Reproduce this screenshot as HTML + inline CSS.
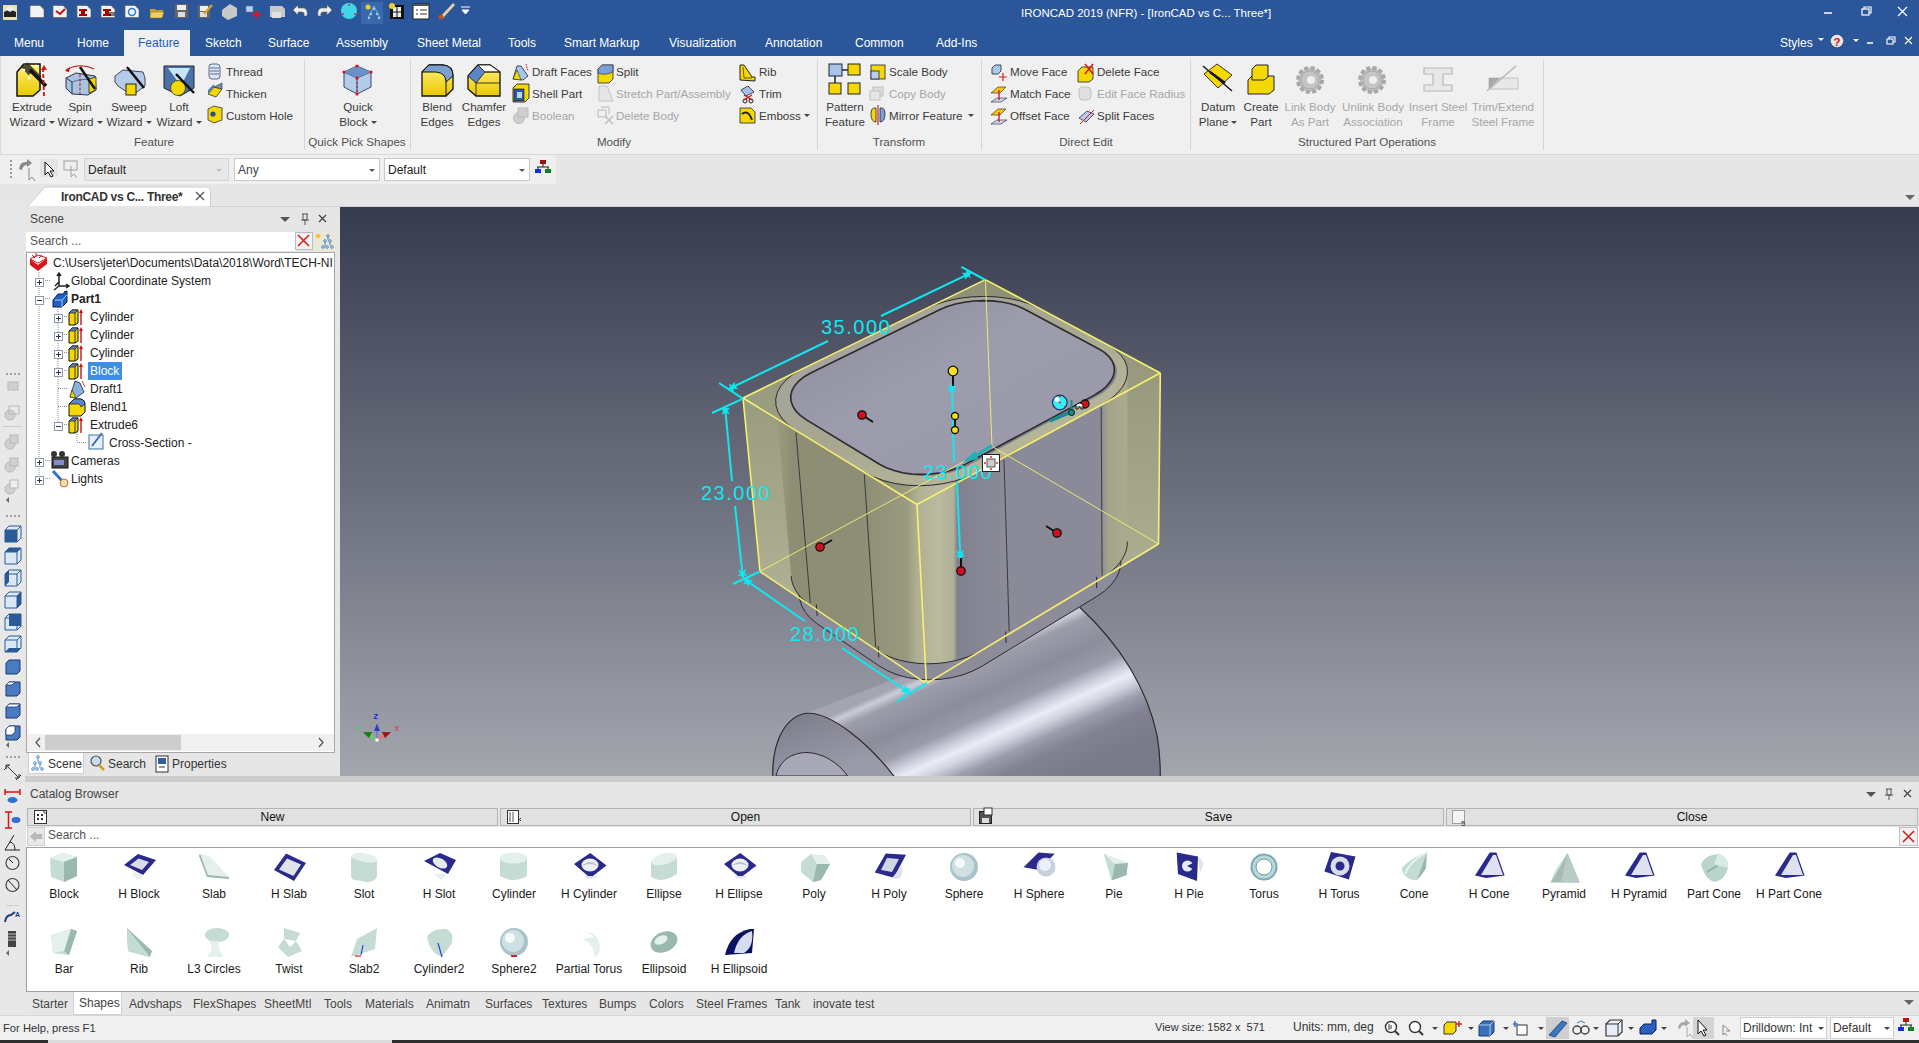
<!DOCTYPE html>
<html><head><meta charset="utf-8">
<style>
*{margin:0;padding:0;box-sizing:border-box}
html,body{width:1919px;height:1043px;overflow:hidden;background:#f0f0f0;font-family:"Liberation Sans",sans-serif;font-size:12px;color:#222;position:relative}
.a{position:absolute}
</style></head><body>
<!-- TITLE BAR -->
<div class="a" style="left:0;top:0;width:1919px;height:56px;background:#2b579a"></div>
<svg class="a" style="left:0;top:0" width="480" height="28">
 <rect x="3" y="5" width="14" height="15" fill="#e8e0b0"/><path d="M4 12 L10 9 L16 12 L16 17 L4 17Z" fill="#222"/><path d="M5 9 L10 6 L15 9 L10 12Z" fill="#eee"/>
 <g fill="#f2f2f2" stroke="#555" stroke-width="0.6">
  <path d="M30 5.5h10l4 4v8H30z"/><path d="M53 5.5h10l4 4v8H53z"/><path d="M77 5.5h10l4 4v8H77z"/><path d="M101 5.5h10l4 4v8h-14z"/><path d="M125 5.5h10l4 4v8h-14z"/>
 </g>
 <path d="M56 11l4 3 5-5" stroke="#c01010" stroke-width="2" fill="none"/>
 <path d="M79 9h8v2h-2v3h2v2h-8v-2h2v-3h-2z" fill="#a00"/>
 <path d="M103 9h8v2h-2v3h2v2h-8v-2h2v-3h-2z" fill="#a00"/><path d="M109 13h6M109 15h6" stroke="#000" stroke-width="1"/>
 <circle cx="132" cy="12" r="3.5" fill="none" stroke="#2a7fd0" stroke-width="1.5"/>
 <path d="M150 9h5l1 1h7v7h-13z" fill="#c8a030"/><path d="M151 12h13l-2 6h-12z" fill="#f0d060" stroke="#8a6a10" stroke-width="0.5"/>
 <rect x="175" y="4" width="13" height="14" fill="#666" rx="1"/><rect x="177" y="5" width="9" height="5" fill="#eee"/><rect x="178" y="12" width="7" height="5" fill="#ddd"/>
 <rect x="198" y="5" width="12" height="13" fill="#666" rx="1"/><rect x="200" y="6" width="8" height="5" fill="#eee"/><rect x="200" y="12" width="7" height="5" fill="#ddd"/><path d="M204 14 L212 5" stroke="#e0a020" stroke-width="2.2"/>
 <path d="M222 10 L230 4 L237 8 L237 16 L228 20 L222 16Z" fill="#c8c8c8"/>
 <rect x="246" y="6" width="7" height="6" fill="#b8d0f0" stroke="#5070a0" stroke-width="0.6"/><path d="M252 14h9M256.5 10v9" stroke="#d02020" stroke-width="2"/>
 <path d="M270 6h12l3 3v8h-15z" fill="#c8c8c8"/><rect x="272" y="12" width="9" height="6" fill="#e0e0e0"/>
 <path d="M293 10 L298 5 L298 8 L304 8 Q308 9 307 16 L304 16 Q305 12 302 12 L298 12 L298 15Z" fill="#eee" stroke="#666" stroke-width="0.6"/>
 <path d="M332 10 L327 5 L327 8 L321 8 Q317 9 318 16 L321 16 Q320 12 323 12 L327 12 L327 15Z" fill="#eee" stroke="#666" stroke-width="0.6"/>
 <circle cx="349" cy="11" r="8" fill="#40d8e8"/><circle cx="349" cy="5" r="1" fill="#e02040"/><circle cx="343" cy="14" r="1" fill="#e02040"/><circle cx="355" cy="14" r="1" fill="#e02040"/>
 <rect x="361" y="2" width="22" height="22" fill="#3a68ac"/><circle cx="368" cy="7" r="2.5" fill="#f0d020"/><path d="M374 6 L368 18 M374 6 L380 18" stroke="#7ab0e0" stroke-width="1"/><circle cx="374" cy="9" r="1.2" fill="#9cd"/><circle cx="371" cy="14" r="1.2" fill="#9cd"/><circle cx="377" cy="14" r="1.2" fill="#9cd"/><circle cx="369" cy="18" r="1.2" fill="#9cd"/><circle cx="379" cy="18" r="1.2" fill="#9cd"/>
 <rect x="390" y="5" width="14" height="14" fill="#111"/><rect x="393" y="7" width="8" height="10" fill="#eee"/><path d="M393 12h8M397 7v10" stroke="#111" stroke-width="1"/><circle cx="392" cy="6" r="3" fill="#f0d020"/>
 <rect x="413" y="4" width="16" height="15" fill="#fff" stroke="#222" stroke-width="1"/><rect x="413" y="4" width="16" height="2" fill="#555"/><path d="M416 10h2M420 10h7M416 14h2M420 14h7" stroke="#333" stroke-width="1"/>
 <path d="M440 17 L453 3 L455 5 L443 18Z" fill="#e8d0a0"/><circle cx="441" cy="17" r="2.5" fill="#c05020"/>
 <path d="M461 7h9M462 10h7l-3.5 4z" stroke="#fff" fill="#fff" stroke-width="1"/>
</svg>
<div class="a" style="left:1021px;top:7px;color:#fff;font-size:11.5px;white-space:nowrap">IRONCAD 2019 (NFR) - [IronCAD vs C... Three*]</div>
<svg class="a" style="left:1815px;top:0" width="104" height="28">
 <path d="M1824 13h8" transform="translate(-1815,0)" stroke="#fff" stroke-width="1.5"/>
 <g transform="translate(-1815,0)" stroke="#fff" stroke-width="1.2" fill="none"><rect x="1862" y="9" width="7" height="6"/><path d="M1864 9v-2h7v6h-2"/><path d="M1898 7l9 9M1907 7l-9 9"/></g>
</svg>
<!-- TABS -->
<div class="a" style="left:124px;top:30px;width:66px;height:27px;background:#f0f0f0"></div>
<div class="a tabs" style="top:36px;left:0;width:1919px;height:16px;color:#fff;font-size:12px;white-space:nowrap">
 <span class="a" style="left:14px">Menu</span><span class="a" style="left:77px">Home</span><span class="a" style="left:138px;color:#1d5fc0">Feature</span><span class="a" style="left:205px">Sketch</span><span class="a" style="left:268px">Surface</span><span class="a" style="left:336px">Assembly</span><span class="a" style="left:417px">Sheet Metal</span><span class="a" style="left:508px">Tools</span><span class="a" style="left:564px">Smart Markup</span><span class="a" style="left:669px">Visualization</span><span class="a" style="left:765px">Annotation</span><span class="a" style="left:855px">Common</span><span class="a" style="left:936px">Add-Ins</span>
 <span class="a" style="left:1780px">Styles</span>
</div>
<svg class="a" style="left:1800px;top:28px" width="119" height="28">
 <path d="M18 10h6l-3 3z" fill="#fff"/>
 <circle cx="37" cy="13" r="6.5" fill="#e8e8ec" stroke="#222" stroke-width="0.6" stroke-dasharray="1.5 1"/><text x="33.6" y="17.5" font-size="11.5" font-weight="bold" fill="#e01010" font-family="Liberation Sans">?</text>
 <path d="M53 11h6l-3 3z" fill="#fff"/>
 <path d="M67 15h6" stroke="#fff" stroke-width="1.5"/>
 <g stroke="#fff" stroke-width="1.1" fill="none"><rect x="87" y="11" width="6" height="5"/><path d="M89 11v-2h6v5h-2"/><path d="M105 9l7 7M112 9l-7 7"/></g>
</svg>

<!-- RIBBON -->
<div class="a" style="left:0;top:56px;width:1919px;height:99px;background:#f0f0f0;border-bottom:1px solid #d8d8d8;border-left:1px solid #dcdcdc"></div>
<svg class="a" style="left:0;top:56px" width="1919" height="98">
 <defs>
  <linearGradient id="yel" x1="0" y1="0" x2="0" y2="1"><stop offset="0" stop-color="#fff27a"/><stop offset="1" stop-color="#e8c800"/></linearGradient>
  <linearGradient id="blu" x1="0" y1="0" x2="1" y2="0"><stop offset="0" stop-color="#4a78b8"/><stop offset="1" stop-color="#b8d0ec"/></linearGradient>
 </defs>
 <g stroke="#d6d6d6" stroke-width="1"><path d="M304.5 3v91M410.5 3v91M817.5 3v91M981.5 3v91M1190.5 3v91M1543.5 3v91"/></g>
 <!-- Extrude -->
 <path d="M17 16 L24 8 L40 8 L40 34 L33 40 L17 40Z" fill="url(#yel)" stroke="#111" stroke-width="1.5"/>
 <path d="M22 9 L30 18 M26 8 L40 22" stroke="#222" stroke-width="4" opacity="0.8"/>
 <path d="M30 14 L46 30" stroke="#111" stroke-width="3.5"/><path d="M43 12 L44 40" stroke="#e01010" stroke-width="1.8" stroke-dasharray="4 2"/><path d="M41 14 L44 9 L47 14Z" fill="#e01010"/>
 <circle cx="24" cy="14" r="1.3" fill="#fff"/><circle cx="29" cy="22" r="1.3" fill="#fff"/><circle cx="36" cy="10" r="1.2" fill="#fff"/>
 <!-- Spin -->
 <path d="M66 22 L76 17 L95 20 L96 34 L88 39 L72 38 L66 32Z" fill="#a8c4e4" stroke="#334" stroke-width="1"/>
 <path d="M66 22 L72 26 L72 38" fill="none" stroke="#334" stroke-width="1"/><path d="M72 26 Q82 22 95 24" fill="none" stroke="#556" stroke-width="0.8"/>
 <path d="M89 23 L96 21 L96 34 L89 37Z" fill="#f5d800" stroke="#222" stroke-width="0.8"/>
 <path d="M80 11 L95 33" stroke="#111" stroke-width="2.5"/><path d="M80 18 L80 40" stroke="#c01010" stroke-width="1" stroke-dasharray="3 1.5"/>
 <path d="M66 14 Q80 6 94 13" fill="none" stroke="#c01010" stroke-width="1.2"/><path d="M65 15 L70 11 L69 16Z" fill="#c01010"/>
 <!-- Sweep -->
 <path d="M115 20 L123 14 L143 16 L145 22 L145 30 L137 36 L127 36 L118 30 L115 26Z" fill="#b4cce8" stroke="#445" stroke-width="1"/>
 <rect x="126" y="28" width="10" height="11" fill="#f5d800" stroke="#222" stroke-width="1"/>
 <path d="M127 11 L144 32" stroke="#111" stroke-width="2.5"/><circle cx="121" cy="12" r="1.2" fill="#fff"/><circle cx="129" cy="10" r="1.2" fill="#fff"/>
 <!-- Loft -->
 <path d="M164 10 L194 10 L194 32 L180 40 L164 32Z" fill="#4a72a8" stroke="#223" stroke-width="1"/>
 <path d="M168 12 L190 12 L181 30Z" fill="#c8e4f8"/>
 <circle cx="178" cy="32" r="7.5" fill="#f5d800" stroke="#333" stroke-width="0.8"/><path d="M176 18 L194 37" stroke="#111" stroke-width="2.5"/>
 <!-- Thread -->
 <rect x="209" y="8" width="11" height="15" rx="3" fill="#dde6f4" stroke="#5a6a8a" stroke-width="1"/><path d="M210 12h9M210 15h9M210 18h9" stroke="#5a6a8a" stroke-width="1"/>
 <!-- Thicken -->
 <path d="M208 38 L214 31 L222 33 L216 41Z" fill="#f5d800" stroke="#333" stroke-width="0.8"/><path d="M214 31 L222 27 L222 33Z" fill="#7090c0" stroke="#333" stroke-width="0.6"/><path d="M208 38 L208 34 L214 28 L214 31Z" fill="#5a7ab0"/>
 <!-- Custom Hole -->
 <path d="M208 53 L214 50 L222 52 L222 64 L214 67 L208 64Z" fill="#f5d800" stroke="#333" stroke-width="0.8"/><circle cx="213" cy="58" r="2.6" fill="#2a4a90"/>
 <!-- Quick Block -->
 <path d="M344 16 L357 10 L371 16 L371 31 L357 38 L344 31Z" fill="#b4cce8" stroke="#2a4a80" stroke-width="1"/><path d="M344 16 L357 22 L371 16 M357 22 L357 38" fill="none" stroke="#2a4a80" stroke-width="1"/><path d="M344 16 L357 10 L371 16 L357 22Z" fill="#6a90c8"/>
 <path d="M357 22 L357 38" stroke="#c01010" stroke-dasharray="2 2"/><circle cx="344" cy="16" r="1.6" fill="#e01020"/><circle cx="357" cy="10" r="1.6" fill="#e01020"/><circle cx="371" cy="16" r="1.6" fill="#e01020"/><circle cx="357" cy="22" r="1.6" fill="#e01020"/><circle cx="357" cy="38" r="1.6" fill="#e01020"/>
 <!-- Blend Edges -->
 <path d="M422 16 L429 9 L443 9 Q453 10 453 20 L453 33 L446 40 L422 40Z" fill="url(#yel)" stroke="#111" stroke-width="1.3"/>
 <path d="M422 16 L429 9 L443 9 Q453 10 453 20 L446 26 Q446 17 436 16Z" fill="#7aa0d0" stroke="#111" stroke-width="1"/><path d="M446 26 L446 40" stroke="#111" stroke-width="1"/>
 <!-- Chamfer -->
 <path d="M468 20 L478 9 L490 9 L500 16 L500 40 L476 40 L468 33Z" fill="url(#yel)" stroke="#111" stroke-width="1.3"/>
 <path d="M468 20 L478 9 L485 16 L476 27Z" fill="#5a88c4" stroke="#111" stroke-width="0.8"/><path d="M478 9 L490 9 L500 16 L485 16Z" fill="#fff" stroke="#111" stroke-width="0.8"/><path d="M485 16 L500 16 M476 27 L476 40 M476 27 L500 27" fill="none" stroke="#111" stroke-width="0.8"/>
 <!-- Draft faces -->
 <path d="M513 23 L517 10 L521 10 L528 20 L523 24Z" fill="#a8c4e8" stroke="#223" stroke-width="0.8"/><path d="M513 23 L517 14 L521 24Z" fill="#f5d800" stroke="#223" stroke-width="0.6"/><path d="M526 8 L528 15" stroke="#c01010" stroke-width="1" stroke-dasharray="1.5 1"/>
 <!-- Shell part -->
 <path d="M513 32 L517 28 L529 28 L529 42 L525 46 L513 46Z" fill="#f5d800" stroke="#112" stroke-width="0.8"/><rect x="514" y="33" width="10" height="12" fill="#2a5aa0" stroke="#112" stroke-width="0.6"/><rect x="517" y="36" width="5" height="6" fill="#b8d4f0"/>
 <!-- Boolean disabled -->
 <g fill="#cfcfcf" stroke="#bdbdbd" stroke-width="1"><circle cx="519" cy="62" r="5.5"/><rect x="518" y="52" width="10" height="9"/></g>
 <!-- Split -->
 <path d="M598 13 L602 9 L613 9 L613 23 L609 27 L598 27Z" fill="#f5d800" stroke="#223" stroke-width="0.8"/><path d="M598 13 L602 9 L613 9 L613 16 Q605 20 598 17Z" fill="#7aa0d8" stroke="#223" stroke-width="0.6"/>
 <!-- Stretch disabled -->
 <path d="M599 30 L607 30 L613 45 L599 45Z" fill="#e6e6e6" stroke="#c4c4c4" stroke-width="1"/>
 <!-- Delete body disabled -->
 <path d="M598 54 h8v7h-8z M601 51 h8v7" fill="none" stroke="#b8b8b8" stroke-width="1"/><path d="M605 60 l8 8 M613 60 l-8 8" stroke="#c0c0c0" stroke-width="1.6"/>
 <!-- Rib -->
 <path d="M740 24 L740 9 L744 9 L752 21 L755 21 L755 25Z" fill="#f5d800" stroke="#223" stroke-width="1"/><path d="M743 11 L744 22 L752 22" fill="none" stroke="#223" stroke-width="0.7"/>
 <!-- Trim -->
 <path d="M741 34 L748 30 L754 36 L746 40Z" fill="#a8c0e8" stroke="#223" stroke-width="0.8"/><circle cx="745" cy="45" r="2" fill="none" stroke="#222"/><circle cx="751" cy="45" r="2" fill="none" stroke="#222"/><path d="M744 39 L752 44 M752 39 L744 44" stroke="#c01010" stroke-width="1.2"/>
 <!-- Emboss -->
 <path d="M740 52 L751 52 L755 56 L755 67 L740 67Z" fill="#f5d800" stroke="#223" stroke-width="0.8"/><path d="M742 58 Q748 53 752 64" fill="none" stroke="#223" stroke-width="2"/>
 <path d="M804 58h6l-3 3z" fill="#444"/>
 <!-- Pattern feature -->
 <rect x="829" y="8" width="13" height="12" fill="#a8c4e8" stroke="#223" stroke-width="1"/><rect x="848" y="8" width="12" height="11" fill="#f5d800" stroke="#223" stroke-width="1"/><rect x="829" y="27" width="12" height="11" fill="#f5d800" stroke="#223" stroke-width="1"/><rect x="848" y="27" width="12" height="11" fill="#f5d800" stroke="#223" stroke-width="1"/><path d="M842 14h6M835 20v7" stroke="#223" stroke-width="1.5"/>
 <!-- Scale body -->
 <rect x="871" y="9" width="14" height="14" fill="#f5d800" stroke="#223" stroke-width="0.8"/><rect x="871" y="15" width="8" height="8" fill="#b8d0f0" stroke="#223" stroke-width="0.8"/>
 <!-- Copy body disabled -->
 <rect x="873" y="31" width="10" height="9" fill="#ddd" stroke="#c0c0c0"/><rect x="870" y="35" width="10" height="9" fill="#e6e6e6" stroke="#c0c0c0"/>
 <!-- Mirror feature -->
 <path d="M871 58 Q871 51 876 52 L876 66 Q871 66 871 58Z" fill="#f5d800" stroke="#223" stroke-width="0.8"/><path d="M885 58 Q885 51 880 52 L880 66 Q885 66 885 58Z" fill="#7aa0d8" stroke="#223" stroke-width="0.8"/><path d="M878 49 L878 69" stroke="#d02020" stroke-width="1.2"/>
 <path d="M968 58h6l-3 3z" fill="#444"/>
 <!-- Move face -->
 <path d="M992 12 L995 9 L1001 9 L1001 15 L998 18 L992 18Z" fill="#a8c8f0" stroke="#223" stroke-width="0.8"/><path d="M1003 17 v8 M999 21 h8" stroke="#d02020" stroke-width="1.2"/>
 <!-- Match face -->
 <path d="M991 37 L998 31 L1006 31 L1000 37Z" fill="#f5c800" stroke="#223" stroke-width="0.6"/><path d="M991 46 L997 42 L1007 42 L1001 46Z" fill="#c8d8f0" stroke="#223" stroke-width="0.6"/><path d="M999 34 L999 44" stroke="#d02020" stroke-width="1.4"/>
 <!-- Offset face -->
 <path d="M991 59 L998 53 L1006 53 L1000 59Z" fill="#f5c800" stroke="#223" stroke-width="0.6"/><path d="M991 68 L997 64 L1007 64 L1001 68Z" fill="#c8d8f0" stroke="#223" stroke-width="0.6"/><path d="M999 56 L999 66" stroke="#d02020" stroke-width="1.4"/>
 <!-- Delete face -->
 <path d="M1078 15 L1082 11 L1093 11 L1093 23 L1089 26 L1078 26Z" fill="#f5d800" stroke="#223" stroke-width="0.8"/><path d="M1085 8 L1093 18 M1093 8 L1085 18" stroke="#e01010" stroke-width="1.5"/>
 <!-- Edit face radius disabled -->
 <rect x="1079" y="31" width="12" height="13" rx="4" fill="#e0e0e0" stroke="#c0c0c0"/>
 <!-- Split faces -->
 <path d="M1079 62 L1087 55 L1094 58 L1086 66Z" fill="#b8c8f0" stroke="#334" stroke-width="0.8"/><path d="M1080 68 L1094 54" stroke="#d02020" stroke-width="1"/>
 <!-- Datum plane -->
 <path d="M1204 18 L1217 8 L1232 19 L1218 32Z" fill="#f5d800" stroke="#333" stroke-width="1"/><path d="M1203 10 L1232 35" stroke="#111" stroke-width="1.4"/><path d="M1210 16 L1225 27" stroke="#111" stroke-width="2.5"/>
 <!-- Create part -->
 <path d="M1248 24 L1252 20 L1274 20 L1274 34 L1269 38 L1248 38Z" fill="#f5d800" stroke="#223" stroke-width="1"/><path d="M1252 13 L1256 9 L1268 9 L1268 21 L1264 24 L1252 24Z" fill="#f5d800" stroke="#223" stroke-width="1"/>
 <!-- Disabled gears -->
 <g fill="#c4c4c4" stroke="#a8a8a8" stroke-width="1">
  <circle cx="1310" cy="24" r="12" stroke-dasharray="4 2.3" stroke-width="4"/><circle cx="1310" cy="24" r="9"/>
  <circle cx="1372" cy="24" r="12" stroke-dasharray="4 2.3" stroke-width="4"/><circle cx="1372" cy="24" r="9"/>
 </g>
 <circle cx="1311" cy="24" r="4" fill="#eee"/><circle cx="1373" cy="24" r="4" fill="#eee"/>
 <path d="M1424 12 h28 v6 h-9 v11 h9 v6 h-28 v-6 h9 v-11 h-9z" fill="#e8e8e8" stroke="#b8b8b8" stroke-width="1.2"/>
 <path d="M1489 33 L1489 22 L1518 22 L1518 33Z" fill="#e8e8e8" stroke="#c0c0c0"/><path d="M1489 33 L1500 22 L1489 22Z" fill="#a8a8a8"/><path d="M1487 35 L1516 10" stroke="#b4b4b4" stroke-width="1.2"/>
</svg>
<style>
.rl{position:absolute;font-size:11.6px;line-height:12px;color:#3a3a3a;white-space:nowrap}
.rc{position:absolute;font-size:11.6px;line-height:15px;color:#3a3a3a;text-align:center;white-space:nowrap}
.dis{color:#a6a6a6}
.gl{position:absolute;top:136px;font-size:11.6px;line-height:12px;color:#505050;text-align:center;white-space:nowrap}
.dd{display:inline-block;width:0;height:0;border-left:3px solid transparent;border-right:3px solid transparent;border-top:3px solid #444;vertical-align:2px;margin-left:3px}
</style>
<div class="rc" style="left:2px;top:99px;width:60px">Extrude<br>Wizard<span class="dd"></span></div>
<div class="rc" style="left:50px;top:99px;width:60px">Spin<br>Wizard<span class="dd"></span></div>
<div class="rc" style="left:99px;top:99px;width:60px">Sweep<br>Wizard<span class="dd"></span></div>
<div class="rc" style="left:149px;top:99px;width:60px">Loft<br>Wizard<span class="dd"></span></div>
<div class="rl" style="left:226px;top:66px">Thread</div>
<div class="rl" style="left:226px;top:88px">Thicken</div>
<div class="rl" style="left:226px;top:110px">Custom Hole</div>
<div class="gl" style="left:104px;width:100px">Feature</div>
<div class="rc" style="left:318px;top:99px;width:80px">Quick<br>Block<span class="dd"></span></div>
<div class="gl" style="left:304px;width:106px">Quick Pick Shapes</div>
<div class="rc" style="left:407px;top:99px;width:60px">Blend<br>Edges</div>
<div class="rc" style="left:454px;top:99px;width:60px">Chamfer<br>Edges</div>
<div class="rl" style="left:532px;top:66px">Draft Faces</div>
<div class="rl" style="left:532px;top:88px">Shell Part</div>
<div class="rl dis" style="left:532px;top:110px">Boolean</div>
<div class="rl" style="left:616px;top:66px">Split</div>
<div class="rl dis" style="left:616px;top:88px">Stretch Part/Assembly</div>
<div class="rl dis" style="left:616px;top:110px">Delete Body</div>
<div class="rl" style="left:759px;top:66px">Rib</div>
<div class="rl" style="left:759px;top:88px">Trim</div>
<div class="rl" style="left:759px;top:110px">Emboss</div>
<div class="gl" style="left:564px;width:100px">Modify</div>
<div class="rc" style="left:815px;top:99px;width:60px">Pattern<br>Feature</div>
<div class="rl" style="left:889px;top:66px">Scale Body</div>
<div class="rl dis" style="left:889px;top:88px">Copy Body</div>
<div class="rl" style="left:889px;top:110px">Mirror Feature</div>
<div class="gl" style="left:849px;width:100px">Transform</div>
<div class="rl" style="left:1010px;top:66px">Move Face</div>
<div class="rl" style="left:1010px;top:88px">Match Face</div>
<div class="rl" style="left:1010px;top:110px">Offset Face</div>
<div class="rl" style="left:1097px;top:66px">Delete Face</div>
<div class="rl dis" style="left:1097px;top:88px">Edit Face Radius</div>
<div class="rl" style="left:1097px;top:110px">Split Faces</div>
<div class="gl" style="left:1036px;width:100px">Direct Edit</div>
<div class="rc" style="left:1188px;top:99px;width:60px">Datum<br>Plane<span class="dd"></span></div>
<div class="rc" style="left:1231px;top:99px;width:60px">Create<br>Part</div>
<div class="rc dis" style="left:1280px;top:99px;width:60px">Link Body<br>As Part</div>
<div class="rc dis" style="left:1338px;top:99px;width:70px">Unlink Body<br>Association</div>
<div class="rc dis" style="left:1403px;top:99px;width:70px">Insert Steel<br>Frame</div>
<div class="rc dis" style="left:1468px;top:99px;width:70px">Trim/Extend<br>Steel Frame</div>
<div class="gl" style="left:1267px;width:200px">Structured Part Operations</div>

<!-- TOOLBAR ROW -->
<div class="a" style="left:0;top:155px;width:1919px;height:52px;background:#e6e6e6"></div>
<div class="a" style="left:0;top:155px;width:556px;height:29px;background:#efefef"></div>
<svg class="a" style="left:0;top:155px" width="560" height="29">
 <g fill="#9a9a9a"><rect x="10" y="5" width="2" height="2"/><rect x="10" y="9" width="2" height="2"/><rect x="10" y="13" width="2" height="2"/><rect x="10" y="17" width="2" height="2"/><rect x="10" y="21" width="2" height="2"/></g>
 <path d="M19 14 Q20 6 27 7 L27 4 L32 8 L27 12 L27 10 Q23 10 22 15Z" fill="#888"/><path d="M29 13 L29 25 L32 22 L35 26" fill="none" stroke="#888" stroke-width="1"/>
 <rect x="40" y="4" width="18" height="18" fill="#e4e4e4"/><path d="M45 7 L45 20 L48 17 L51 22 L53 21 L50 16 L54 16Z" fill="#fff" stroke="#111" stroke-width="1"/>
 <rect x="64" y="6" width="13" height="9" fill="none" stroke="#a0a0a0"/><path d="M71 11 L71 22 L74 19 L77 23" fill="none" stroke="#a0a0a0"/>
 <rect x="84.5" y="3.5" width="144" height="22" fill="#e8e8e8" stroke="#d4d4d4"/>
 <path d="M216 14h6l-3 3z" fill="#c0c0c0"/>
 <rect x="234.5" y="3.5" width="145" height="22" fill="#fff" stroke="#c8c8c8"/>
 <path d="M369 14h6l-3 3z" fill="#555"/>
 <rect x="384.5" y="3.5" width="145" height="22" fill="#fff" stroke="#c8c8c8"/>
 <path d="M519 14h6l-3 3z" fill="#555"/>
 <rect x="540" y="5" width="6" height="4" fill="#a01010"/><path d="M543 9v3M537 12h12M538 12v2M548 12v2" stroke="#222" stroke-width="1" fill="none"/><rect x="535" y="14" width="6" height="4" fill="#1030e0"/><rect x="545" y="14" width="6" height="4" fill="#108020"/>
</svg>
<div class="a" style="left:88px;top:164px;font-size:12px;line-height:12px;color:#222">Default</div>
<div class="a" style="left:238px;top:164px;font-size:12px;line-height:12px;color:#444">Any</div>
<div class="a" style="left:388px;top:164px;font-size:12px;line-height:12px;color:#222">Default</div>
<!-- DOC TAB -->
<svg class="a" style="left:0;top:184px" width="1919" height="24">
 <path d="M211 22.5 H1919" stroke="#d0d0d0"/>
 <path d="M27 23 L45 3 H207 Q210.5 3 210.5 6.5 V23Z" fill="#fff" stroke="#cfcfcf"/>
 <path d="M196 8 l8 8 M204 8 l-8 8" stroke="#555" stroke-width="1.3"/>
 <path d="M1905 11h10l-5 5z" fill="#666"/>
</svg>
<div class="a" style="left:61px;top:191px;font-size:12px;line-height:12px;color:#333;font-weight:bold;letter-spacing:-0.3px">IronCAD vs C... Three*</div>

<!-- SCENE PANEL -->
<div class="a" style="left:0;top:207px;width:340px;height:808px;background:#e6e6e6"></div>
<div class="a" style="left:25px;top:207px;width:313px;height:568px;background:#e6e6e6"></div>
<div class="a" style="left:30px;top:213px;font-size:12px;line-height:12px;color:#444">Scene</div>
<svg class="a" style="left:270px;top:207px" width="70" height="24">
 <path d="M10 10h10l-5 5z" fill="#555"/>
 <path d="M32 7h6M33 7v6h4v-6M31 13h8M35 13v5" stroke="#555" stroke-width="1" fill="none"/>
 <path d="M49 8l7 7M56 8l-7 7" stroke="#444" stroke-width="1.3"/>
</svg>
<div class="a" style="left:26px;top:232px;width:270px;height:19px;background:#fff"></div>
<div class="a" style="left:30px;top:235px;font-size:12px;line-height:12px;color:#555">Search ...</div>
<svg class="a" style="left:294px;top:231px" width="42" height="22">
 <rect x="1.5" y="1.5" width="17" height="17" fill="#f4f4f4" stroke="#bbb"/>
 <path d="M4 4l11 11M15 4l-11 11" stroke="#d42020" stroke-width="1.6"/>
 <rect x="21" y="1" width="20" height="20" fill="#ebe6d6"/>
 <path d="M24 2 l1 2 2 0 -1.5 1.5 .5 2 -2 -1 -2 1 .5 -2 -1.5 -1.5 2 0z" fill="#f0c020"/>
 <g fill="none" stroke="#3a80c8" stroke-width="0.9"><circle cx="34" cy="5" r="1.3"/><circle cx="31" cy="10" r="1.3"/><circle cx="36" cy="10" r="1.3"/><circle cx="29" cy="16" r="1.3"/><circle cx="33" cy="16" r="1.3"/><circle cx="38" cy="16" r="1.3"/><path d="M34 6v3M31 11v4M36 11v4"/></g>
</svg>
<!-- tree box -->
<div class="a" style="left:26px;top:252px;width:309px;height:500px;background:#fff;border:1px solid #a8a8a8;border-bottom:0"></div>
<svg class="a" style="left:26px;top:252px" width="309" height="500">
 <defs>
  <g id="exp"><rect x="0.5" y="0.5" width="8" height="8" fill="#fff" stroke="#8a9ab0"/></g>
  <g id="plus"><use href="#exp"/><path d="M2 4.5h5M4.5 2v5" stroke="#334" stroke-width="1"/></g>
  <g id="minus"><use href="#exp"/><path d="M2 4.5h5" stroke="#334" stroke-width="1"/></g>
  <g id="cyl"><path d="M1 5 L4 2 L10 2 L10 15 L7 17 L1 17Z" fill="#f5d800" stroke="#111" stroke-width="1"/><path d="M1 5 L4 2 L10 2 L7 5Z" fill="#5a88d0" stroke="#111" stroke-width="0.7"/><path d="M7 5v12" stroke="#111" stroke-width="0.8"/><path d="M13 17 V3" stroke="#d01010" stroke-width="1.4"/><path d="M11 5 L13 1 L15 5Z" fill="#d01010"/></g>
 </defs>
 <g stroke="#909090" stroke-width="1" stroke-dasharray="1 1" fill="none">
  <path d="M13 20 V226 M13 28.5 H24 M13 46.5 H24 M13 208.5 H24 M13 226.5 H24"/>
  <path d="M32 55 V172 M32 64.5 H42 M32 82.5 H42 M32 100.5 H42 M32 118.5 H42 M32 136.5 H42 M32 154.5 H42 M32 172.5 H42"/>
  <path d="M51 176 V190 M51 190.5 H61"/>
 </g>
 <!-- row0 icon -->
 <path d="M4 7 L12 13 L21 6 L21 12 L12 19 L4 13Z" fill="#d81818"/><path d="M4 7 L12 3 L21 6 L12 11Z" fill="#fff" stroke="#d81818" stroke-width="1"/><path d="M10 1v4M6 3l3 3M16 3l-3 3" stroke="#d81818" stroke-width="1"/>
 <use href="#plus" x="9" y="26"/>
 <path d="M29 34 L33 30 M33 22 V34 H42 M31 24 L33 21 L35 24 M40 32 L43 34 L40 36 M33 34 L28 38" stroke="#222" stroke-width="1.5" fill="none"/>
 <use href="#minus" x="9" y="44"/>
 <path d="M27 48 L32 42 L38 42 L38 40 L41 39 L41 50 L36 55 L27 55Z" fill="#2060c8" stroke="#0a2050" stroke-width="1"/><path d="M29 48 L36 48 L36 55 M36 48 L41 43" stroke="#a8c8f0" stroke-width="1" fill="none"/>
 <use href="#plus" x="28" y="62"/><use href="#cyl" x="42" y="56"/>
 <use href="#plus" x="28" y="80"/><use href="#cyl" x="42" y="74"/>
 <use href="#plus" x="28" y="98"/><use href="#cyl" x="42" y="92"/>
 <use href="#plus" x="28" y="116"/><use href="#cyl" x="42" y="110"/>
 <rect x="62" y="110" width="34" height="18" fill="#3d8ee6"/>
 <path d="M44 145 L49 129 L54 131 L58 140 L50 146Z" fill="#8ab0e0" stroke="#222" stroke-width="0.8"/><path d="M44 145 L46 138 L50 146Z" fill="#f5d800" stroke="#222" stroke-width="0.6"/><path d="M56 129 L59 135" stroke="#c01010" stroke-width="0.8"/>
 <path d="M43 152 L48 147 L55 147 Q59 148 59 152 L59 160 L55 164 L43 164Z" fill="#f5d800" stroke="#111" stroke-width="1"/><path d="M43 152 L48 147 L55 147 Q59 148 59 152 L55 155 Q54 151 50 152Z" fill="#5a88d0" stroke="#111" stroke-width="0.7"/>
 <use href="#minus" x="28" y="170"/><use href="#cyl" x="42" y="164"/>
 <rect x="63" y="183" width="14" height="14" fill="#e8f0f8" stroke="#3a70b0" stroke-width="1"/><path d="M66 194 L76 181" stroke="#3a70b0" stroke-width="2"/>
 <use href="#plus" x="9" y="206"/>
 <rect x="26" y="205" width="16" height="11" fill="#444" stroke="#111"/><circle cx="28" cy="202" r="3" fill="#333"/><circle cx="36" cy="202" r="3" fill="#333"/><rect x="28" y="208" width="10" height="5" fill="#8888cc"/>
 <use href="#plus" x="9" y="224"/>
 <path d="M27 219 L38 231" stroke="#3a70c0" stroke-width="3"/><circle cx="38" cy="231" r="4" fill="#f0e0a0" stroke="#c04040" stroke-width="0.8"/>
 <!-- h scrollbar -->
 <rect x="1" y="482" width="307" height="17" fill="#f0f0f0"/>
 <rect x="19" y="483" width="136" height="15" fill="#cdcdcd"/>
 <path d="M14 486 L10 490.5 L14 495 M293 486 L297 490.5 L293 495" stroke="#555" stroke-width="1.3" fill="none"/>
</svg>
<style>.tr{position:absolute;font-size:12px;line-height:12px;color:#222;white-space:nowrap}</style>
<div class="tr" style="left:53px;top:257px">C:\Users\jeter\Documents\Data\2018\Word\TECH-NI</div>
<div class="tr" style="left:71px;top:275px">Global Coordinate System</div>
<div class="tr" style="left:71px;top:293px;font-weight:bold">Part1</div>
<div class="tr" style="left:90px;top:311px">Cylinder</div>
<div class="tr" style="left:90px;top:329px">Cylinder</div>
<div class="tr" style="left:90px;top:347px">Cylinder</div>
<div class="tr" style="left:90px;top:365px;color:#fff">Block</div>
<div class="tr" style="left:90px;top:383px">Draft1</div>
<div class="tr" style="left:90px;top:401px">Blend1</div>
<div class="tr" style="left:90px;top:419px">Extrude6</div>
<div class="tr" style="left:109px;top:437px">Cross-Section -</div>
<div class="tr" style="left:71px;top:455px">Cameras</div>
<div class="tr" style="left:71px;top:473px">Lights</div>
<!-- bottom tabs -->
<div class="a" style="left:26px;top:752px;width:309px;height:1px;background:#a8a8a8"></div>
<div class="a" style="left:28px;top:753px;width:56px;height:21px;background:#fff;border:1px solid #d0d0d0;border-top:0"></div>
<svg class="a" style="left:28px;top:753px" width="200" height="22">
 <g fill="none" stroke="#3a80c8" stroke-width="0.9"><circle cx="10" cy="4" r="1.3"/><circle cx="7" cy="10" r="1.3"/><circle cx="12" cy="10" r="1.3"/><circle cx="5" cy="16" r="1.3"/><circle cx="9" cy="16" r="1.3"/><circle cx="14" cy="16" r="1.3"/><path d="M10 5v4M7 11v4M12 11v4"/></g>
 <circle cx="68" cy="8" r="5" fill="#c8dcf0" stroke="#555" stroke-width="1.2"/><path d="M71 12 L76 17" stroke="#d0a020" stroke-width="2.5"/>
 <rect x="128" y="3" width="12" height="16" fill="#fff" stroke="#333"/><rect x="130" y="5" width="8" height="6" fill="#3060a0"/><path d="M131 14h6" stroke="#333"/>
</svg>
<div class="tr" style="left:48px;top:758px;color:#333">Scene</div>
<div class="tr" style="left:108px;top:758px;color:#333">Search</div>
<div class="tr" style="left:172px;top:758px;color:#333">Properties</div>
<!-- LEFT VERTICAL TOOLBAR -->
<div class="a" style="left:0;top:207px;width:25px;height:808px;background:#e8e8e8"></div>
<svg class="a" style="left:0;top:360px" width="25" height="600">
 <g fill="#a0a0a0"><rect x="6" y="13" width="2" height="2"/><rect x="10" y="13" width="2" height="2"/><rect x="14" y="13" width="2" height="2"/><rect x="18" y="13" width="2" height="2"/></g>
 <g fill="#d0d0d0" stroke="#b8b8b8" stroke-width="1">
  <rect x="8" y="22" width="10" height="8"/><circle cx="10" cy="55" r="5"/><rect x="9" y="46" width="10" height="8" fill="none"/>
  <circle cx="10" cy="84" r="5"/><rect x="10" y="75" width="8" height="8"/>
  <circle cx="10" cy="107" r="5"/><rect x="10" y="98" width="8" height="8"/>
  <circle cx="10" cy="129" r="5"/><rect x="10" y="120" width="8" height="8" fill="#eee"/>
 </g>
 <path d="M3 66.5h19" stroke="#ccc"/>
 <path d="M9 137 L6 140 L9 143Z" fill="#666"/>
 <g fill="#a0a0a0"><rect x="6" y="155" width="2" height="2"/><rect x="10" y="155" width="2" height="2"/><rect x="14" y="155" width="2" height="2"/><rect x="18" y="155" width="2" height="2"/></g>
 <defs><g id="vc"><path d="M5 7 L9 3 L21 3 L21 15 L17 19 L5 19Z" fill="#dce8f6" stroke="#2a5a98" stroke-width="1"/><path d="M5 7 H17 V19 M17 7 L21 3" fill="none" stroke="#2a5a98" stroke-width="1"/></g>
 <g id="vd"><path d="M6 8 L9 5 L20 5 L20 16 L17 19 L6 19Z" fill="#4a7ac0" stroke="#1a3a70" stroke-width="1"/></g></defs>
 <use href="#vc" y="163"/><rect x="5" y="170" width="12" height="12" fill="#2a5a98"/>
 <use href="#vc" y="185"/><path d="M5 192 L9 188 L21 188 L17 192Z" fill="#2a5a98"/>
 <use href="#vc" y="207"/><path d="M5 214 L9 210 L9 222 L5 226Z" fill="#2a5a98"/>
 <use href="#vc" y="229"/><path d="M17 236 L21 232 L21 244 L17 248Z" fill="#2a5a98"/>
 <use href="#vc" y="251"/><rect x="9" y="254" width="12" height="12" fill="#2a5a98"/>
 <use href="#vc" y="273"/><path d="M5 292 L9 288 L21 288 L17 292Z" fill="#2a5a98"/>
 <use href="#vd" y="295"/>
 <use href="#vd" y="317"/><path d="M6 330 L9 327 L14 327 L14 322 L17 322 L17 333 L6 333Z" fill="#fff" opacity="0"/><path d="M6 325 L9 322 L15 322 L12 325Z" fill="#fff" stroke="#1a3a70" stroke-width="0.8"/>
 <use href="#vd" y="339"/><path d="M6 347 L9 344 L20 344 L17 347Z" fill="#fff" stroke="#1a3a70" stroke-width="0.8"/>
 <use href="#vd" y="361"/><path d="M6 369 L9 366 L15 366 L15 372 L12 375 L6 375Z" fill="#fff" stroke="#1a3a70" stroke-width="0.8"/>
 <path d="M9 382 L6 385 L9 388Z" fill="#666"/>
 <g fill="#a0a0a0"><rect x="6" y="396" width="2" height="2"/><rect x="10" y="396" width="2" height="2"/><rect x="14" y="396" width="2" height="2"/><rect x="18" y="396" width="2" height="2"/></g>
 <path d="M6 405 L19 418 M6 405 l0 4 M6 405 l4 0 M19 418 l-4 0 M19 418 l0 -4 M4 410 L9 405 M16 420 L21 415" stroke="#333" stroke-width="1" fill="none"/>
 <path d="M5 432 H20 M5 429 V435 M20 429 V435" stroke="#e01010" stroke-width="1.5"/><ellipse cx="12.5" cy="440" rx="5" ry="3" fill="#3070d0"/>
 <path d="M5 452 H12 M8.5 452 V468 M5 468 H12" stroke="#e01010" stroke-width="1.5"/><ellipse cx="16" cy="460" rx="4.5" ry="3" fill="#3070d0"/>
 <path d="M5 490 H20 M5 490 L14 475 M10 482 Q15 483 15 490" stroke="#222" stroke-width="1" fill="none"/>
 <circle cx="12.5" cy="503" r="6.5" fill="none" stroke="#444" stroke-width="1.2"/><path d="M9 499 L13 503" stroke="#222"/>
 <circle cx="12.5" cy="525" r="6.5" fill="none" stroke="#444" stroke-width="1.2"/><path d="M8 520 L17 530" stroke="#222"/>
 <path d="M6 545.5 H19" stroke="#ccc"/>
 <path d="M5 562 Q6 555 11 555 L15 552" stroke="#1a3a80" stroke-width="2" fill="none"/><text x="15" y="557" font-size="7" font-weight="bold" fill="#1a3a80" font-family="Liberation Sans">A</text>
 <rect x="8" y="571" width="8" height="16" fill="#444"/><path d="M8 574h8M8 577h8M8 580h8" stroke="#bbb"/>
 <path d="M9 590 L6 593 L9 596Z" fill="#666"/>
</svg>

<!-- VIEWPORT -->
<svg class="a" style="left:340px;top:207px" width="1579" height="569" viewBox="340 207 1579 569">
<defs>
<linearGradient id="bg" x1="0" y1="0" x2="0" y2="1"><stop offset="0" stop-color="#373b4f"/><stop offset="0.5" stop-color="#6b6f7d"/><stop offset="1" stop-color="#a4a6ae"/></linearGradient>
<linearGradient id="cylg" gradientUnits="userSpaceOnUse" x1="1000" y1="639.6" x2="1061.5" y2="776.4"><stop offset="0" stop-color="#a4a4b2"/><stop offset="0.04" stop-color="#cdcdd8"/><stop offset="0.1" stop-color="#9c9caa"/><stop offset="0.28" stop-color="#8c8c9a"/><stop offset="0.42" stop-color="#9a9aa8"/><stop offset="0.5" stop-color="#cacada"/><stop offset="0.565" stop-color="#ececf8"/><stop offset="0.625" stop-color="#d4d4e2"/><stop offset="0.715" stop-color="#9c9cac"/><stop offset="0.82" stop-color="#828292"/><stop offset="1" stop-color="#7a7a88"/></linearGradient>
<linearGradient id="cap" gradientUnits="userSpaceOnUse" x1="800" y1="715" x2="820" y2="775"><stop offset="0" stop-color="#7e7e8c"/><stop offset="1" stop-color="#9a9aa8"/></linearGradient>
<linearGradient id="wall" gradientUnits="userSpaceOnUse" x1="770" y1="0" x2="1130" y2="0">
 <stop offset="0" stop-color="#a2a286"/><stop offset="0.06" stop-color="#8e8e74"/><stop offset="0.25" stop-color="#8e8e76"/><stop offset="0.38" stop-color="#9a9a80"/><stop offset="0.41" stop-color="#b0b094"/><stop offset="0.47" stop-color="#baba9e"/><stop offset="0.51" stop-color="#b0b098"/><stop offset="0.52" stop-color="#80808e"/><stop offset="0.65" stop-color="#8a8a98"/><stop offset="0.92" stop-color="#8a8a98"/><stop offset="0.94" stop-color="#a4a48a"/><stop offset="1" stop-color="#acac8e"/></linearGradient>
<linearGradient id="rim" gradientUnits="userSpaceOnUse" x1="800" y1="300" x2="900" y2="500"><stop offset="0" stop-color="#a4a4a8"/><stop offset="0.6" stop-color="#a6a690"/><stop offset="1" stop-color="#b4b498"/></linearGradient>
<linearGradient id="rec" gradientUnits="userSpaceOnUse" x1="850" y1="300" x2="950" y2="480"><stop offset="0" stop-color="#8e8e9e"/><stop offset="0.5" stop-color="#9c9cac"/><stop offset="1" stop-color="#9a9aaa"/></linearGradient>
</defs>
<rect x="340" y="207" width="1579" height="569" fill="url(#bg)"/>
<path d="M772.8 777 L781 730 Q790 714 805 713.7 L1080 607.5 C1100 626 1118 648 1130 668 C1145 693 1153 716 1157 735 C1160 752 1160.3 765 1160.3 777Z" fill="url(#cylg)"/>
<path d="M1080 607.5 C1100 626 1118 648 1130 668 C1145 693 1153 716 1157 735 C1160 752 1160.3 765 1160.3 777" fill="none" stroke="#2a2a30" stroke-width="1.2"/>
<path d="M772.8 777 C772 745 783 718 805 713.5 C830 710 870 745 894.6 777Z" fill="url(#cap)" stroke="#2a2a30" stroke-width="1.2"/>
<path d="M776 776 C780 758 795 752.5 807 752.5 C822 753 838 762 847.6 776Z" fill="#a8a8b8" stroke="#2a2a30" stroke-width="1"/>
<path d="M743.0 398.0 L985.4 279.6 L1160.3 373.0 L1158.5 544.0 L926.4 683.6 L760.0 571.5Z" fill="#e8e896" fill-opacity="0.45"/>
<path d="M797.1 565.1 L798.6 558.3 L801.9 551.7 L806.8 545.5 L813.4 539.9 L821.3 534.9 L936.8 472.7 L946.0 468.5 L956.1 465.1 L966.9 462.6 L978.2 461.0 L989.7 460.4 L1001.0 460.9 L1012.0 462.2 L1022.4 464.6 L1031.9 467.9 L1040.2 472.0 L1102.2 508.3 L1109.1 513.1 L1114.6 518.7 L1118.4 524.7 L1120.5 531.2 L1120.7 537.9 L1120.8 564.7 L1119.2 571.6 L1116.0 578.4 L1111.0 584.9 L1104.6 591.0 L1096.7 596.5 L982.0 666.2 L972.9 670.9 L962.9 674.8 L952.1 677.6 L940.9 679.3 L929.5 679.8 L918.2 679.2 L907.3 677.5 L897.0 674.7 L887.6 670.8 L879.4 666.1 L817.9 624.3 L811.0 618.8 L805.6 612.6 L801.8 606.1 L799.7 599.2 L797.4 572.0Z" fill="#8c8c9a" stroke="#2a2a30" stroke-width="1"/>
<path d="M775.7 399.0 L777.4 392.2 L780.9 385.8 L786.3 379.7 L793.3 374.1 L801.9 369.2 L926.5 308.4 L936.4 304.2 L947.3 300.9 L959.0 298.4 L971.3 296.9 L983.7 296.4 L996.0 296.9 L1008.0 298.3 L1019.2 300.6 L1029.5 303.9 L1038.5 307.9 L1107.2 344.6 L1114.8 349.5 L1120.7 354.9 L1124.9 360.9 L1127.1 367.3 L1127.5 374.0 L1127.2 545.2 L1125.6 552.2 L1122.2 559.2 L1117.1 565.9 L1110.3 572.2 L1102.1 577.9 L982.8 649.7 L973.3 654.6 L962.9 658.5 L951.7 661.4 L940.0 663.2 L928.1 663.8 L916.3 663.2 L905.0 661.4 L894.2 658.5 L884.5 654.5 L875.9 649.6 L810.5 605.5 L803.3 599.8 L797.7 593.5 L793.7 586.7 L791.6 579.6 L776.0 405.8Z" fill="url(#wall)"/>
<path d="M1127.3 541.6 L1127.2 545.2 L1126.6 548.7 L1125.6 552.2 L1124.1 555.8 L1122.2 559.2 L1119.9 562.6 L1117.1 565.9 L1113.9 569.1 L1110.3 572.2 L1106.4 575.1 L1102.1 577.9 L982.8 649.7 L978.2 652.3 L973.3 654.6 L968.2 656.7 L962.9 658.5 L957.4 660.1 L951.7 661.4 L945.9 662.5 L940.0 663.2 L934.1 663.6 L928.1 663.8 L922.2 663.6 L916.3 663.2 L910.6 662.4 L905.0 661.4 L899.5 660.1 L894.2 658.5 L889.2 656.6 L884.5 654.5 L880.0 652.1 L875.9 649.6 L810.5 605.5 L806.7 602.8 L803.3 599.8 L800.3 596.7 L797.7 593.5 L795.5 590.1 L793.7 586.7 L792.4 583.2 L791.6 579.6 L791.2 576.1" fill="none" stroke="#2a2a30" stroke-width="1"/>
<path d="M817.2 615.9 L816.3 604.5" stroke="#2a2a30" stroke-width="1"/>
<path d="M878.8 657.6 L878.1 646.1" stroke="#2a2a30" stroke-width="1"/>
<path d="M1006.1 642.9 L1005.7 631.5" stroke="#2a2a30" stroke-width="1"/>
<path d="M1096.7 588.2 L1096.6 576.9" stroke="#2a2a30" stroke-width="1"/>
<path d="M810.3 603.2 L796.0 432.6" stroke="#3a3a40" stroke-width="1"/>
<path d="M875.7 647.3 L864.3 474.5" stroke="#3a3a40" stroke-width="1"/>
<path d="M1009.2 631.4 L1004.0 459.8" stroke="#3a3a40" stroke-width="1"/>
<path d="M1102.1 575.6 L1101.2 407.2" stroke="#3a3a40" stroke-width="1"/>
<path d="M926.5 308.4 L936.4 304.2 L947.3 300.9 L959.0 298.4 L971.3 296.9 L983.7 296.4 L996.0 296.9 L1008.0 298.3 L1019.2 300.6 L1029.5 303.9 L1038.5 308.0 L1107.2 344.6 L1114.8 349.5 L1120.7 354.9 L1124.9 360.9 L1127.1 367.3 L1127.4 374.0 L1125.8 380.7 L1122.3 387.3 L1116.9 393.6 L1109.8 399.6 L1101.2 404.9 L976.1 472.6 L966.2 477.2 L955.2 480.9 L943.5 483.6 L931.3 485.2 L918.8 485.8 L906.5 485.1 L894.6 483.4 L883.4 480.6 L873.2 476.8 L864.2 472.2 L795.8 430.3 L788.3 424.9 L782.4 418.9 L778.3 412.5 L776.0 405.8 L775.7 399.0 L777.4 392.2 L780.9 385.8 L786.3 379.7 L793.3 374.1 L801.9 369.2Z" fill="url(#rim)" stroke="#2a2a30" stroke-width="1"/>
<path d="M939.6 309.8 L947.1 306.6 L955.5 304.0 L964.4 302.2 L973.8 301.0 L983.3 300.6 L992.7 300.9 L1001.8 302.0 L1010.4 303.8 L1018.3 306.3 L1025.2 309.5 L1101.4 350.4 L1107.2 354.1 L1111.7 358.3 L1114.9 362.9 L1116.6 367.8 L1116.8 372.8 L1115.6 378.0 L1112.9 383.0 L1108.8 387.8 L1103.4 392.4 L1096.8 396.4 L967.5 465.9 L960.0 469.4 L951.6 472.2 L942.6 474.3 L933.2 475.5 L923.7 475.9 L914.3 475.5 L905.2 474.2 L896.6 472.1 L888.8 469.2 L881.9 465.7 L806.1 419.6 L800.3 415.5 L795.8 410.9 L792.7 406.0 L791.0 400.9 L790.7 395.8 L792.0 390.6 L794.7 385.7 L798.8 381.0 L804.2 376.7 L810.7 373.0Z" fill="#80808c" stroke="none"/>
<path d="M939.6 309.8 L947.1 306.6 L955.5 304.0 L964.4 302.2 L973.8 301.0 L983.3 300.6 L992.7 300.9 L1001.8 302.0 L1010.4 303.8 L1018.3 306.3 L1025.2 309.5 L1098.9 349.0 L1104.7 352.7 L1109.2 356.9 L1112.4 361.5 L1114.1 366.4 L1114.4 371.5 L1113.1 376.6 L1110.4 381.6 L1106.3 386.5 L1100.9 391.0 L1094.3 395.1 L965.0 464.4 L957.5 467.9 L949.1 470.7 L940.1 472.8 L930.8 474.0 L921.3 474.4 L911.8 474.0 L902.7 472.7 L894.2 470.6 L886.3 467.7 L879.5 464.2 L806.1 419.6 L800.3 415.5 L795.8 410.9 L792.7 406.0 L791.0 400.9 L790.7 395.8 L792.0 390.6 L794.7 385.7 L798.8 381.0 L804.2 376.7 L810.7 373.0Z" fill="url(#rec)" stroke="#2a2a30" stroke-width="1.6"/>
<path d="M743.0 398.0 L985.4 279.6" stroke="#f8f070" stroke-width="1.6" stroke-opacity="1"/>
<path d="M985.4 279.6 L1160.3 373.0" stroke="#f8f070" stroke-width="1.6" stroke-opacity="1"/>
<path d="M1160.3 373.0 L917.0 504.5" stroke="#f8f070" stroke-width="1.6" stroke-opacity="1"/>
<path d="M917.0 504.5 L743.0 398.0" stroke="#f8f070" stroke-width="1.6" stroke-opacity="1"/>
<path d="M743.0 398.0 L760.0 571.5" stroke="#f8f070" stroke-width="1.6" stroke-opacity="1"/>
<path d="M1160.3 373.0 L1158.5 544.0" stroke="#f8f070" stroke-width="1.6" stroke-opacity="1"/>
<path d="M917.0 504.5 L926.4 683.6" stroke="#f8f070" stroke-width="1.6" stroke-opacity="1"/>
<path d="M1158.5 544.0 L926.4 683.6" stroke="#f8f070" stroke-width="1.6" stroke-opacity="1"/>
<path d="M926.4 683.6 L760.0 571.5" stroke="#f8f070" stroke-width="1.6" stroke-opacity="1"/>
<path d="M985.4 279.6 L992.0 446.4" stroke="#f8f070" stroke-width="0.9" stroke-opacity="1"/>
<path d="M760.0 571.5 L992.0 446.4" stroke="#f8f070" stroke-width="0.9" stroke-opacity="1"/>
<path d="M992.0 446.4 L1158.5 544.0" stroke="#f8f070" stroke-width="0.9" stroke-opacity="1"/><g stroke="#10e8f0" stroke-width="2" fill="none">
 <path d="M719 383 L743 398.7 M961.4 266.8 L985.4 280"/>
 <path d="M728.8 389 L828 341 M881 316 L971 272.8"/>
 <path d="M712 413 L743 398.7"/>
 <path d="M725 406 L732 481 M735 506 L743 578"/>
 <path d="M733 584 L760 571.5"/>
 <path d="M744 579 L804.7 621 M842 648 L909.7 692.8"/>
 <path d="M896.7 701.5 L927 682.8"/>
 <path d="M951.8 383.7 L954 462 M957 482 L960.4 559"/>
</g>
<g fill="#10e8f0" stroke="#10e8f0" stroke-width="1">
<path d="M728.8 389.0 L737.4 388.4 L733.8 386.6 L734.6 382.6Z"/>
<path d="M733.2 391.3 L729.8 384.1" stroke-width="1.6"/>
<path d="M971.0 272.8 L962.4 273.4 L966.0 275.2 L965.2 279.1Z"/>
<path d="M966.6 270.5 L970.0 277.7" stroke-width="1.6"/>
<path d="M725.0 406.0 L722.6 414.3 L725.5 411.6 L728.9 413.7Z"/>
<path d="M721.3 409.4 L729.3 408.6" stroke-width="1.6"/>
<path d="M743.0 578.0 L745.3 569.7 L742.4 572.4 L738.9 570.4Z"/>
<path d="M746.6 574.6 L738.7 575.5" stroke-width="1.6"/>
<path d="M744.0 579.0 L748.8 586.2 L748.6 582.2 L752.4 580.9Z"/>
<path d="M744.2 584.0 L748.7 577.4" stroke-width="1.6"/>
<path d="M909.7 692.8 L904.8 685.7 L905.0 689.7 L901.3 691.1Z"/>
<path d="M909.4 687.8 L905.0 694.5" stroke-width="1.6"/>
<path d="M951.8 383.7 L948.8 391.8 L952.0 389.3 L955.2 391.6Z"/>
<path d="M947.9 386.8 L955.9 386.6" stroke-width="1.6"/>
<path d="M960.4 559.0 L963.2 550.9 L960.2 553.4 L956.9 551.1Z"/>
<path d="M964.3 555.8 L956.3 556.2" stroke-width="1.6"/>
</g>
<g font-family="Liberation Sans" font-size="20" fill="#10e8f0" letter-spacing="1.5">
 <text x="821" y="334">35.000</text>
 <text x="701" y="500">23.000</text>
 <text x="790" y="641">28.000</text>
 <text x="923" y="479">23.000</text>
</g>
<path d="M992 445.5 L972 458" stroke="#20b0b8" stroke-width="3"/><path d="M963 462 L975 451 L978 459Z" fill="#20b0b8"/>
<rect x="982.5" y="454.5" width="17" height="17" fill="#fff" stroke="#222" stroke-width="1"/><rect x="987" y="459" width="8" height="8" fill="#ccc" stroke="#333" stroke-width="0.8"/><g fill="#e02020"><circle cx="991" cy="457" r="1"/><circle cx="991" cy="469" r="1"/><circle cx="985" cy="463" r="1"/><circle cx="997" cy="463" r="1"/></g>
<g stroke="#111" stroke-width="2" fill="none">
 <path d="M953 376 L953 386 M955 416 L955 430 M862 415 L873 422 M820 547 L832 540 M961 571 L961 558 M1057 533 L1046 526"/>
</g>
<g stroke="#111" stroke-width="1.3">
 <circle cx="953" cy="371" r="4.8" fill="#f8e020"/><circle cx="955" cy="416" r="3.5" fill="#f8e020"/><circle cx="955" cy="430" r="3.5" fill="#f8e020"/>
 <circle cx="862" cy="415" r="4.2" fill="#d01020"/><circle cx="820" cy="547" r="4.2" fill="#d01020"/><circle cx="961" cy="571" r="4.2" fill="#d01020"/><circle cx="1057" cy="533" r="4.2" fill="#d01020"/><circle cx="1085" cy="404" r="4" fill="#d01020"/>
</g>
<path d="M1050 421 L1071 412" stroke="#109090" stroke-width="3"/>
<circle cx="1059.8" cy="402.5" r="7.3" fill="#30f0f8" stroke="#1a3070" stroke-width="1.2"/><circle cx="1057" cy="399.5" r="2.5" fill="#e8ffff"/><circle cx="1059.8" cy="402.5" r="1" fill="#e02020"/><circle cx="1059.8" cy="396.5" r="0.9" fill="#e02020"/><circle cx="1054.5" cy="406.5" r="0.8" fill="#e02020"/><circle cx="1065" cy="406.5" r="0.8" fill="#e02020"/>
<path d="M1071.5 400 V412" stroke="#109090" stroke-width="2"/><circle cx="1071.5" cy="412.5" r="3" fill="#109090" stroke="#111" stroke-width="1"/>
<path d="M1076 409 L1076 405 Q1079.5 401 1083 405 L1083 409 L1081 409 L1079.5 406 L1078 409Z" fill="#fff" stroke="#111" stroke-width="1"/><path d="M1076 407 h2 M1081 407 h2" stroke="#109090" stroke-width="1.5"/>
<!-- triad -->
<g>
 <path d="M377 739 L377 729" stroke="#7080e0" stroke-width="2"/><path d="M374 731 L377 723.6 L380 731Z" fill="#3040c0"/>
 <path d="M376 739 L368 735" stroke="#60d060" stroke-width="2.2"/><path d="M362.8 732.3 L372 732 L369 738Z" fill="#108010"/>
 <path d="M378 739 L386 735" stroke="#f07070" stroke-width="2.2"/><path d="M391 732.3 L382 732 L385 738Z" fill="#a01010"/>
 <circle cx="377" cy="740" r="1.8" fill="#fff"/>
 <text x="373.5" y="719" font-size="7.5" font-weight="bold" fill="#1020e8" font-family="Liberation Sans">Z</text>
 <text x="355.5" y="730.5" font-size="7" fill="#10e010" font-family="Liberation Sans">Y</text>
 <text x="394.5" y="730.5" font-size="7" fill="#f01020" font-family="Liberation Sans">X</text>
</g>
</svg>

<!-- CATALOG -->
<style>.cl{position:absolute;width:100px;text-align:center;font-size:12px;line-height:12px;color:#1a1a1a;white-space:nowrap}
.ct{position:absolute;top:998px;font-size:12px;line-height:12px;color:#444;white-space:nowrap}
.cb{position:absolute;top:808px;height:18px;background:#e1e1e1;border:1px solid #b4b4b4;font-size:12px;line-height:16px;text-align:center;color:#111;padding-left:20px}</style>
<div class="a" style="left:25px;top:776px;width:1894px;height:239px;background:#e6e6e6"></div>
<div class="a" style="left:25px;top:776px;width:1894px;height:6px;background:#cdcdcd"></div>
<div class="a" style="left:30px;top:788px;font-size:12px;line-height:12px;color:#444">Catalog Browser</div>
<svg class="a" style="left:1860px;top:783px" width="59" height="22"><path d="M6 9h10l-5 5z" fill="#555"/><path d="M26 6h6M27 6v6h4v-6M25 12h8M29 12v5" stroke="#555" stroke-width="1" fill="none"/><path d="M44 7l7 7M51 7l-7 7" stroke="#444" stroke-width="1.3"/></svg>
<div class="cb" style="left:27px;width:471px">New</div>
<div class="cb" style="left:500px;width:471px">Open</div>
<div class="cb" style="left:973px;width:471px">Save</div>
<div class="cb" style="left:1446px;width:472px">Close</div>
<svg class="a" style="left:0;top:805px" width="1919" height="45">
 <rect x="34.5" y="5.5" width="12" height="13" fill="#fff" stroke="#333"/><path d="M44 5v3h3" stroke="#333" fill="none"/><g fill="#333"><rect x="37" y="9" width="2" height="2"/><rect x="41" y="9" width="2" height="2"/><rect x="37" y="13" width="2" height="2"/><rect x="41" y="13" width="2" height="2"/></g>
 <rect x="507.5" y="5.5" width="11" height="13" fill="#fff" stroke="#333"/><path d="M510 7v10M513 7v10" stroke="#555"/><path d="M518 13 l3 3 M521 13 l-3 3" stroke="#333"/>
 <rect x="979.5" y="6.5" width="12" height="12" fill="#555" stroke="#222"/><rect x="982" y="13" width="7" height="5" fill="#ddd"/><rect x="984" y="3" width="8" height="7" fill="#fff" stroke="#333"/>
 <rect x="1452.5" y="5.5" width="12" height="13" fill="#f4f4f4" stroke="#555" stroke-dasharray="1 1"/><text x="1461" y="21" font-size="8" font-family="Liberation Sans" fill="#333">5</text>
 <rect x="26" y="22" width="1893" height="20" fill="#fff"/>
 <rect x="27.5" y="22.5" width="17" height="18" fill="#e8e8e8" stroke="#d0d0d0"/><path d="M30 31.5 L36 26 V29 H42 V34 H36 V37Z" fill="#b8b8b8"/>
 <rect x="1899.5" y="22.5" width="18" height="18" fill="#f0f0f0" stroke="#c0c0c0"/><path d="M1903 26l11 11M1914 26l-11 11" stroke="#d42020" stroke-width="1.6"/>
</svg>
<div class="a" style="left:48px;top:829px;font-size:12px;line-height:12px;color:#555">Search ...</div>
<div class="a" style="left:26px;top:847px;width:1893px;height:145px;background:#fff;border-top:1px solid #9ea0aa;border-left:1px solid #9ea0aa;border-bottom:1px solid #9ea0aa"></div>
<svg class="a" style="left:0;top:0" width="1919" height="1043">
<g transform="translate(49.0 852.0)"><path d="M1 6 L13 1 L28 5 L28 24 L15 30 L2 25Z" fill="#c4dcd4"/><path d="M1 6 L13 1 L28 5 L15 10Z" fill="#e4f0ec"/><path d="M15 10 L28 5 L28 24 L15 30Z" fill="#98b8b0"/></g>
<g transform="translate(124.0 852.0)"><path d="M0 13 L14 2 L32 8 L19 23Z" fill="#2a2a8c"/><path d="M6 13 L14.5 6.5 L25 10 L18 18Z" fill="#d8dee6"/><path d="M10 19 L19 23 L17 28 L8 24Z" fill="#eef0f0"/></g>
<g transform="translate(199.0 852.0)"><path d="M1 1.5 L10.7 4.6 L30 25 L9 23Z" fill="#e4f0ec"/><path d="M1 1.5 L9 23 L30 25 L30 27 L8 25 L0 4Z" fill="#98b8b0"/></g>
<g transform="translate(274.0 852.0)"><path d="M0 18 L12 1.5 L32 11 L20 29Z" fill="#2a2a8c"/><path d="M5 17.5 L13 6.5 L27 12.5 L19.5 24Z" fill="#e0e4ea"/></g>
<g transform="translate(349.0 852.0)"><path d="M2 6 Q2 1 12 1 L22 3 Q28 5 28 10 L28 24 Q26 30 18 30 L6 28 Q2 27 2 24Z" fill="#c4dcd4"/><path d="M2 6 Q2 1 12 1 L22 3 Q28 5 28 10 Q20 12 12 9Z" fill="#e4f0ec"/></g>
<g transform="translate(424.0 852.0)"><path d="M0 9 L16 1 L32 8 L24 22Z" fill="#2a2a8c"/><ellipse cx="16" cy="11" rx="8" ry="4.5" fill="#e4eaf0" transform="rotate(30 16 11)"/><path d="M10 22 L18 28 L22 22Z" fill="#e6ecec"/></g>
<g transform="translate(499.0 852.0)"><path d="M1 6 L1 24 Q14 32 28 24 L28 6Z" fill="#c4dcd4"/><ellipse cx="14.5" cy="6" rx="13.5" ry="5.5" fill="#e4f0ec"/></g>
<g transform="translate(574.0 852.0)"><path d="M0 12 L16.3 1 L32.5 13.6 L16.3 26Z" fill="#2a2a8c"/><ellipse cx="16" cy="13" rx="8.5" ry="6.5" fill="#eef0f6"/><path d="M8 14 Q16 6 24 14 Q16 10 8 14Z" fill="#b8c0d0"/><path d="M10 24 Q16 30 24 24Z" fill="#e0e4e8"/></g>
<g transform="translate(649.0 852.0)"><path d="M2 9 L2 25 Q12 32 28 22 L28 6Z" fill="#c4dcd4"/><ellipse cx="15" cy="7" rx="13" ry="5.5" fill="#e4f0ec" transform="rotate(-15 15 7)"/></g>
<g transform="translate(724.0 852.0)"><path d="M0 12 L16.3 1 L32.5 13.6 L16.3 26Z" fill="#2a2a8c"/><ellipse cx="16" cy="13" rx="8.5" ry="6.5" fill="#eef0f6"/><path d="M8 14 Q16 6 24 14 Q16 10 8 14Z" fill="#b8c0d0"/><path d="M10 24 Q16 30 24 24Z" fill="#e0e4e8"/></g>
<g transform="translate(799.0 852.0)"><path d="M2 10 L12 2 L26 4 L31 12 L22 28 L14 30 L2 20Z" fill="#c4dcd4"/><path d="M12 2 L26 4 L31 12 L18 12Z" fill="#e4f0ec"/><path d="M18 12 L31 12 L22 28 L14 30Z" fill="#98b8b0"/></g>
<g transform="translate(874.0 852.0)"><path d="M0.8 20.4 L11.7 1.4 L32 2.8 L19.8 25.8Z" fill="#2a2a8c"/><path d="M7 18 L13 6 L25 7 L18 20Z" fill="#d0d6e4"/><path d="M18 26 Q30 30 28 14Z" fill="#dde0e6"/></g>
<g transform="translate(949.0 852.0)"><circle cx="15" cy="15" r="14" fill="#a8c4c8"/><circle cx="14" cy="14" r="11" fill="#cfe0e4"/><circle cx="11" cy="11" r="5" fill="#f4fafa"/></g>
<g transform="translate(1024.0 852.0)"><path d="M-0.5 15.3 L14.5 0.4 L30.7 1.8 L15 18Z" fill="#2a2a8c"/><circle cx="22" cy="15" r="9.5" fill="#c8d0e0"/><circle cx="21" cy="13" r="6" fill="#eef0f8"/></g>
<g transform="translate(1099.0 852.0)"><path d="M4.5 1.4 L28.9 10.9 L27.5 23 L12.6 28.5Z" fill="#c4dcd4"/><path d="M4.5 1.4 L28.9 10.9 L12.6 28.5 L16 12Z" fill="#e4f0ec"/><path d="M16 12 L28.9 10.9 L27.5 23 L12.6 28.5Z" fill="#98b8b0"/></g>
<g transform="translate(1174.0 852.0)"><path d="M2.7 0.4 L24 4.5 L23 28.9 L4 22Z" fill="#2a2a8c"/><circle cx="13.5" cy="14" r="5.5" fill="#e6eaf2"/><path d="M13 14 L19 11 L19 17Z" fill="#2a2a8c"/><path d="M24 5 Q33 10 26 20Z" fill="#e0e2e8"/></g>
<g transform="translate(1249.0 852.0)"><circle cx="15" cy="15" r="13.5" fill="#7aaab0"/><circle cx="15" cy="15" r="11.5" fill="#b8d8dc"/><circle cx="15" cy="15" r="8" fill="#fff" stroke="#6a9aa0" stroke-width="1"/></g>
<g transform="translate(1324.0 852.0)"><path d="M0.4 19.4 L7 -0.1 L31.5 4.5 L24.8 27.5Z" fill="#2a2a8c"/><circle cx="16" cy="14" r="9.5" fill="#d8dee8"/><circle cx="16" cy="14" r="4.5" fill="#2a2a8c"/></g>
<g transform="translate(1399.0 852.0)"><path d="M28 0 Q12 6 2.6 16 Q4 27 17.5 28.5Z" fill="#c4dcd4"/><path d="M28 0 L17.5 28.5 Q24 22 27 16Z" fill="#98b8b0"/><path d="M28 0 Q10 10 6 22" fill="none" stroke="#e8f4f0" stroke-width="2"/></g>
<g transform="translate(1474.0 852.0)"><path d="M1 23.5 L15.7 0.4 L22.4 0.4 L30.6 23.5 L12 26Z" fill="#2a2a8c"/><path d="M7 23 L19 3 L22 3 L29 23Z" fill="#dfe2ee"/></g>
<g transform="translate(1549.0 852.0)"><path d="M18.5 1 L1.3 30.5 L30.7 30.5Z" fill="#a8bcb4"/><path d="M18.5 1 L1.3 30.5 L6 18Z" fill="#d8e8e4"/><path d="M18.5 1 L12 30.5 L30.7 30.5Z" fill="#b8ccc4"/></g>
<g transform="translate(1624.0 852.0)"><path d="M1 23.5 L15.7 0.4 L22.4 0.4 L30.6 23.5 L12 26Z" fill="#2a2a8c"/><path d="M7 23 L19 3 L22 3 L29 23Z" fill="#dfe2ee"/></g>
<g transform="translate(1699.0 852.0)"><path d="M2 12 Q6 3 19 2 Q30 4 29 16 Q26 28 16 30 Q6 28 2 12Z" fill="#b8d4cc"/><path d="M19 2 Q30 4 29 16 L15 12Z" fill="#d8ece6"/><path d="M8 20 L18 14" stroke="#90b0a8" stroke-width="2"/></g>
<g transform="translate(1774.0 852.0)"><path d="M1 23.5 L15.7 0.4 L22.4 0.4 L30.6 23.5 L12 26Z" fill="#2a2a8c"/><path d="M7 23 L19 3 L22 3 L29 23Z" fill="#dfe2ee"/></g>
<g transform="translate(49.0 927.0)"><path d="M2 8 L22 2 L28 4 L20 28 L4 26Z" fill="#c4dcd4"/><path d="M22 2 L28 4 L20 28 L15 24Z" fill="#98b8b0"/><path d="M2 8 L22 2 L15 24 L4 26Z" fill="#e4f0ec"/></g>
<g transform="translate(124.0 927.0)"><path d="M3 1 L28 24 L26 30 L4 24Z" fill="#98b8b0"/><path d="M3 1 L4 24 L26 30Z" fill="#c4dcd4"/></g>
<g transform="translate(199.0 927.0)"><ellipse cx="18" cy="8" rx="12" ry="7" fill="#c4dcd4"/><path d="M10 14 Q16 20 8 30 L24 30 Q18 20 20 14Z" fill="#e4f0ec"/></g>
<g transform="translate(274.0 927.0)"><path d="M10 1 L26 6 L22 14 L28 24 L14 30 L4 20 L10 12Z" fill="#c4dcd4"/><path d="M10 12 L22 14 L16 20Z" fill="#fff"/></g>
<g transform="translate(349.0 927.0)"><path d="M2 30 L8 12 L28 1 L26 22Z" fill="#c4dcd4"/><path d="M12 28 L14 18" stroke="#3040e0" stroke-width="1.2"/><path d="M6 29 h6" stroke="#e02020" stroke-width="1.2"/></g>
<g transform="translate(424.0 927.0)"><path d="M3 10 Q8 1 22 2 Q30 4 28 16 L18 30 Q6 26 3 10Z" fill="#c4dcd4"/><path d="M14 16 L18 30" stroke="#3040e0" stroke-width="1.2"/></g>
<g transform="translate(499.0 927.0)"><circle cx="15" cy="15" r="14" fill="#a8c4c8"/><circle cx="14" cy="14" r="11" fill="#cfe0e4"/><circle cx="11" cy="11" r="5" fill="#f4fafa"/><rect x="12" y="28" width="6" height="2" fill="#e02020"/></g>
<g transform="translate(574.0 927.0)"><path d="M6 6 Q24 2 26 20 Q26 28 20 30 Q20 16 8 12Z" fill="#e4f0ec"/><path d="M6 6 Q14 4 20 10 L8 12Z" fill="#fff"/></g>
<g transform="translate(649.0 927.0)"><ellipse cx="15" cy="15" rx="14" ry="10" fill="#98b8b0" transform="rotate(-25 15 15)"/><ellipse cx="12" cy="13" rx="7" ry="4" fill="#e4f0ec" transform="rotate(-25 12 13)"/></g>
<g transform="translate(724.0 927.0)"><path d="M1 28 Q6 6 26 2 L30 2 L28 26Z" fill="#0a1060"/><path d="M10 26 Q14 8 28 4 Q30 20 20 26Z" fill="#d6dcf0"/></g>
</svg>
<div class="cl" style="left:14px;top:888px">Block</div>
<div class="cl" style="left:89px;top:888px">H Block</div>
<div class="cl" style="left:164px;top:888px">Slab</div>
<div class="cl" style="left:239px;top:888px">H Slab</div>
<div class="cl" style="left:314px;top:888px">Slot</div>
<div class="cl" style="left:389px;top:888px">H Slot</div>
<div class="cl" style="left:464px;top:888px">Cylinder</div>
<div class="cl" style="left:539px;top:888px">H Cylinder</div>
<div class="cl" style="left:614px;top:888px">Ellipse</div>
<div class="cl" style="left:689px;top:888px">H Ellipse</div>
<div class="cl" style="left:764px;top:888px">Poly</div>
<div class="cl" style="left:839px;top:888px">H Poly</div>
<div class="cl" style="left:914px;top:888px">Sphere</div>
<div class="cl" style="left:989px;top:888px">H Sphere</div>
<div class="cl" style="left:1064px;top:888px">Pie</div>
<div class="cl" style="left:1139px;top:888px">H Pie</div>
<div class="cl" style="left:1214px;top:888px">Torus</div>
<div class="cl" style="left:1289px;top:888px">H Torus</div>
<div class="cl" style="left:1364px;top:888px">Cone</div>
<div class="cl" style="left:1439px;top:888px">H Cone</div>
<div class="cl" style="left:1514px;top:888px">Pyramid</div>
<div class="cl" style="left:1589px;top:888px">H Pyramid</div>
<div class="cl" style="left:1664px;top:888px">Part Cone</div>
<div class="cl" style="left:1739px;top:888px">H Part Cone</div>
<div class="cl" style="left:14px;top:963px">Bar</div>
<div class="cl" style="left:89px;top:963px">Rib</div>
<div class="cl" style="left:164px;top:963px">L3 Circles</div>
<div class="cl" style="left:239px;top:963px">Twist</div>
<div class="cl" style="left:314px;top:963px">Slab2</div>
<div class="cl" style="left:389px;top:963px">Cylinder2</div>
<div class="cl" style="left:464px;top:963px">Sphere2</div>
<div class="cl" style="left:539px;top:963px">Partial Torus</div>
<div class="cl" style="left:614px;top:963px">Ellipsoid</div>
<div class="cl" style="left:689px;top:963px">H Ellipsoid</div>
<div class="a" style="left:73px;top:992px;width:49px;height:23px;background:#fff;border:1px solid #d0d0d0;border-top:0"></div>
<div class="ct" style="left:32px">Starter</div><div class="ct" style="left:79px;top:997px">Shapes</div><div class="ct" style="left:129px">Advshaps</div><div class="ct" style="left:193px">FlexShapes</div><div class="ct" style="left:264px">SheetMtl</div><div class="ct" style="left:324px">Tools</div><div class="ct" style="left:365px">Materials</div><div class="ct" style="left:426px">Animatn</div><div class="ct" style="left:485px">Surfaces</div><div class="ct" style="left:542px">Textures</div><div class="ct" style="left:599px">Bumps</div><div class="ct" style="left:649px">Colors</div><div class="ct" style="left:696px">Steel Frames</div><div class="ct" style="left:775px">Tank</div><div class="ct" style="left:813px">inovate test</div>
<svg class="a" style="left:1900px;top:995px" width="19" height="16"><path d="M4 5h10l-5 5z" fill="#666"/></svg>

<!-- STATUS -->
<div class="a" style="left:0;top:1015px;width:1919px;height:25px;background:#f0f0f0;border-top:1px solid #d8d8d8"></div>
<div class="a" style="left:0;top:1040px;width:48px;height:3px;background:#2e2e2e"></div>
<div class="a" style="left:48px;top:1040px;width:344px;height:3px;background:#dcdcdc"></div>
<div class="a" style="left:392px;top:1040px;width:1527px;height:3px;background:#2e2e2e"></div>
<div class="a" style="left:3px;top:1022px;font-size:11.2px;line-height:12px;color:#333">For Help, press F1</div>
<div class="a" style="left:1155px;top:1021px;font-size:11px;line-height:12px;color:#333;white-space:pre">View size: 1582 x  571</div>
<div class="a" style="left:1293px;top:1021px;font-size:12px;line-height:12px;color:#333">Units: mm, deg</div>
<svg class="a" style="left:1380px;top:1016px" width="539" height="24">
 <circle cx="11" cy="11" r="5.5" fill="#fff" stroke="#333" stroke-width="1.4"/><path d="M15 15l4 4" stroke="#333" stroke-width="2"/><path d="M9 8v6M11 9v4" stroke="#333"/>
 <circle cx="35" cy="11" r="5.5" fill="#fff" stroke="#333" stroke-width="1.4"/><path d="M39 15l4 4" stroke="#333" stroke-width="2"/>
 <path d="M52 11h6l-3 3z" fill="#444"/>
 <path d="M64 9 L67 6 L76 6 L76 15 L73 18 L64 18Z" fill="#f5d800" stroke="#333"/><path d="M76 8h6M79 5v6" stroke="#d02020" stroke-width="1.4"/>
 <path d="M88 11h6l-3 3z" fill="#444"/>
 <path d="M99 9 L103 5 L114 5 L114 16 L110 20 L99 20Z" fill="#3a70b8" stroke="#1a3a70"/><path d="M99 9 H110 V20 M110 9 L114 5" stroke="#a8c8f0" fill="none"/>
 <path d="M123 11h6l-3 3z" fill="#444"/>
 <rect x="137" y="9" width="10" height="10" fill="#fff" stroke="#333"/><path d="M133 8h5M135 5v6" stroke="#3a70c0" stroke-width="1.5"/>
 <path d="M158 11h6l-3 3z" fill="#444"/>
 <rect x="166" y="1" width="23" height="22" fill="#cfcfcf"/><path d="M169 19 L182 5 L187 7 L175 21Z" fill="#3a78c0" stroke="#1a3a70" stroke-width="0.8"/>
 <circle cx="197" cy="14" r="4" fill="none" stroke="#444" stroke-width="1.4"/><circle cx="205" cy="14" r="4" fill="none" stroke="#444" stroke-width="1.4"/><path d="M197 7 L201 5 L205 7" stroke="#3a70c0" fill="none"/>
 <path d="M213 11h6l-3 3z" fill="#444"/>
 <path d="M226 8 L230 4 L242 4 L242 16 L238 20 L226 20Z" fill="#e8eef8" stroke="#333" stroke-width="1.2"/><path d="M226 8 H238 V20 M238 8 L242 4" stroke="#333" fill="none"/>
 <path d="M248 11h6l-3 3z" fill="#444"/>
 <path d="M260 12 L264 8 L272 8 L272 4 L276 4 L276 14 L272 18 L260 18Z" fill="#2a60c0" stroke="#0a2050"/>
 <path d="M281 11h6l-3 3z" fill="#444"/>
 <path d="M298 12 Q299 5 305 6 L305 3 L310 7 L305 11 L305 9 Q301 9 300 13Z" fill="#aaa"/><path d="M307 11 L307 21 L310 18 L313 22" fill="none" stroke="#aaa"/>
 <rect x="313" y="1" width="21" height="22" fill="#d4d4d4"/><path d="M318 4 L318 18 L321 15 L324 20 L326 19 L323 14 L327 14Z" fill="#fff" stroke="#111"/>
 <path d="M343 9 L343 19 L345 17 L347 20" fill="none" stroke="#888"/><path d="M343 9 L350 15 L346 15" fill="none" stroke="#888"/>
 <rect x="360.5" y="1.5" width="86" height="21" fill="#fff" stroke="#d0d0d0"/><path d="M438 11h6l-3 3z" fill="#444"/>
 <rect x="450.5" y="1.5" width="63" height="21" fill="#fff" stroke="#d0d0d0"/><path d="M504 11h6l-3 3z" fill="#444"/>
 <rect x="523" y="2" width="6" height="4" fill="#c01010"/><path d="M526 6v3M520 9h12M521 9v2M531 9v2" stroke="#222" fill="none"/><rect x="518" y="11" width="6" height="4" fill="#1030e0"/><rect x="528" y="11" width="6" height="4" fill="#108020"/>
</svg>
<div class="a" style="left:1743px;top:1022px;font-size:12px;line-height:12px;color:#333">Drilldown: Int</div>
<div class="a" style="left:1833px;top:1022px;font-size:12px;line-height:12px;color:#333">Default</div>

</body></html>
